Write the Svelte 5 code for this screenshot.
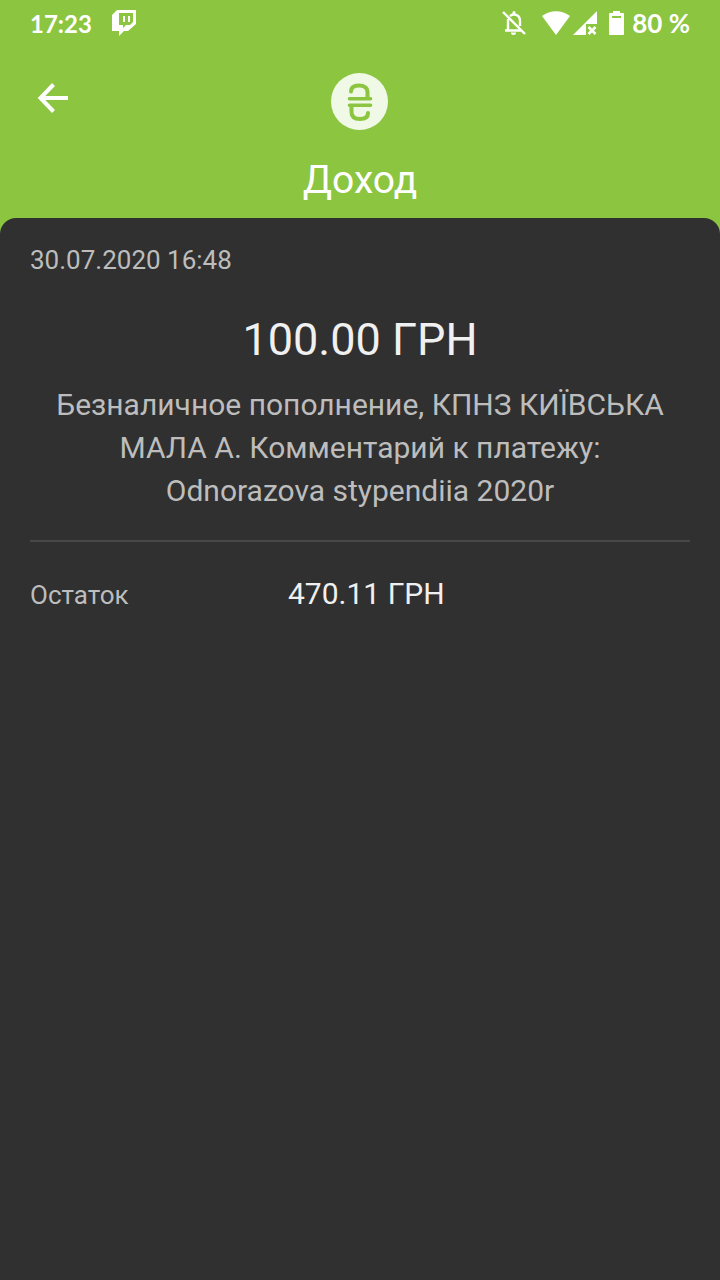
<script lang="ts">
  interface Operation {
    title: string;
    date: string;
    amount: string;
    description: string;
    balance: string;
  }

  const operation: Operation = {
    title: 'Доход',
    date: '30.07.2020 16:48',
    amount: '100.00 ГРН',
    description: 'Безналичное пополнение, КПНЗ КИЇВСЬКА МАЛА А. Комментарий к платежу: Odnorazova stypendiia 2020r',
    balance: '470.11 ГРН',
  };
</script>

<div class="screen">
  <div class="status">
    <span>17:23</span>
    <svg class="twitch" width="26" height="26" viewBox="0 0 26 26" aria-hidden="true">
      <path fill="#fff" fill-rule="evenodd" d="M6 0H25V14L17 21H13L8 26V21H1V5ZM8 3V15H12V18L15 15H19L22 12V3Z" />
      <path fill="#fff" d="M12 6h2v6h-2zM17 6h2v6h-2z" />
    </svg>
    <div class="indicators">
      <svg class="bell" width="26" height="26" viewBox="0 0 26 26" aria-hidden="true">
        <g fill="none" stroke="#fff" stroke-width="2.400">
          <path d="M2 2L24 24" />
          <path d="M7 9V20M4 20.500H20M9 6C12 3.500 19 4 19 11V16" />
        </g>
        <path fill="#fff" d="M11.500 4V2.500a1.500 1.500 0 0 1 3 0V4zM10 22.500h5a2.500 2.500 0 0 1-5 0z" />
      </svg>
      <svg class="wifi" width="28" height="24" viewBox="0 0 28 24" aria-hidden="true">
        <path fill="#fff" d="M0 5C8-1.500 20-1.500 28 5L14 24Z" />
      </svg>
      <svg class="signal" width="24" height="24" viewBox="0 0 24 24" aria-hidden="true">
        <path fill="#fff" d="M24 0V13H13V24H0Z" />
        <path fill="none" stroke="#fff" stroke-width="2.600" d="M15.500 16L22.500 23M22.500 16L15.500 23" />
      </svg>
      <svg class="battery" width="15" height="24" viewBox="0 0 15 24" aria-hidden="true">
        <path fill="#fff" fill-rule="evenodd" d="M4 0H11V2H14Q15 2 15 3V23Q15 24 14 24H1Q0 24 0 23V3Q0 2 1 2H4ZM3 5V7H12V5Z" />
      </svg>
      <span class="charge">80 %</span>
    </div>
  </div>

  <header>
    <button class="back" aria-label="Назад">
      <svg width="32" height="32" viewBox="0 0 32 32" aria-hidden="true">
        <path fill="none" stroke="#fff" stroke-width="4" d="M32 16H5M17.500 2.500L4.500 16L17.500 29.500" />
      </svg>
    </button>
    <svg class="currency" width="58" height="58" viewBox="0 0 58 58" aria-hidden="true">
      <circle cx="28.500" cy="28.500" r="28.500" fill="#f0f8e6" />
      <g fill="none" stroke="#8cc540" stroke-width="4" stroke-linecap="round">
        <path d="M20 18.500C20 14.500 23 12.500 28 12.500C33.500 12.500 36.500 15 36.500 19V25" />
        <path d="M37 40C37 44 34 46 29 46C23.500 46 20.500 43.500 20.500 39V33" />
        <path stroke-width="3.600" d="M18.500 25.800H39.500M18.500 32.200H39.500" />
      </g>
    </svg>
  </header>
  <h1>{operation.title}</h1>

  <main>
    <time datetime="2020-07-30T16:48">{operation.date}</time>
    <p class="amount">{operation.amount}</p>
    <p class="description">{operation.description}</p>
    <dl>
      <dt>Остаток</dt>
      <dd>{operation.balance}</dd>
    </dl>
  </main>
</div>

<style>
  :global(body) {
    background: #8cc540;
  }
  .screen {
    display: flex;
    flex-direction: column;
    min-height: 100vh;
    font-family: Roboto, "Noto Sans", sans-serif;
    color: #fff;
  }
  .status {
    display: flex;
    align-items: center;
    height: 46px;
    padding: 0 30px;
    font: 700 24px Lato, sans-serif;
  }
  .charge {
    font-size: 26px;
  }
  .twitch {
    margin-left: 19px;
  }
  .indicators {
    display: flex;
    align-items: center;
    margin-left: auto;
  }
  .bell {
    margin-right: 15px;
  }
  .signal {
    margin-left: 3px;
  }
  .battery {
    margin: 0 8px 0 12px;
  }
  header {
    display: grid;
    grid-template-columns: 1fr auto 1fr;
    align-items: center;
    padding: 27px 30px 0;
  }
  .back {
    justify-self: start;
    display: flex;
    padding: 0 6px 8px;
    border: 0;
    background: none;
  }
  h1 {
    margin: 26px 0 15px;
    font-size: 39px;
    font-weight: 400;
    line-height: 46px;
    text-align: center;
  }
  main {
    flex: 1;
    padding: 24px 30px;
    border-radius: 16px 16px 0 0;
    background: #303030;
  }
  time {
    display: block;
    color: #bdbdbd;
    font-size: 26px;
    line-height: 36px;
  }
  p {
    margin: 0;
    text-align: center;
  }
  .amount {
    margin-top: 35px;
    color: #f0f0f0;
    font-size: 45px;
    line-height: 54px;
  }
  .description {
    margin-top: 16px;
    padding: 0 26px;
    color: #bdbdbd;
    font-size: 30px;
    line-height: 43px;
  }
  dl {
    display: grid;
    grid-template-columns: 258px 1fr;
    align-items: baseline;
    margin: 28px 0 0;
    padding-top: 32px;
    border-top: 2px solid #484848;
    line-height: 40px;
  }
  dt {
    color: #bdbdbd;
    font-size: 26px;
  }
  dd {
    margin: 0;
    color: #f0f0f0;
    font-size: 30px;
  }
</style>
